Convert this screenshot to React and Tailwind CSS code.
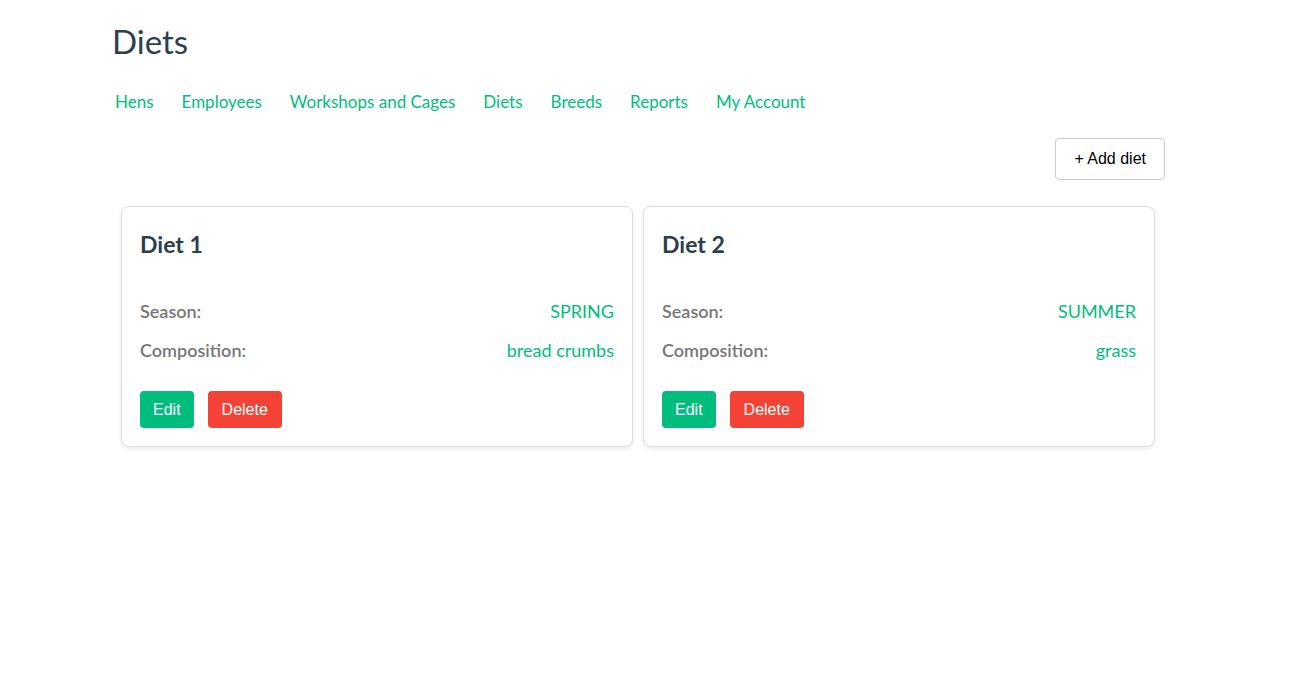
import React from 'react';

const links = ['Hens', 'Employees', 'Workshops and Cages', 'Diets', 'Breeds', 'Reports', 'My Account'];

const diets = [
  { id: 1, name: 'Diet 1', season: 'SPRING', composition: 'bread crumbs' },
  { id: 2, name: 'Diet 2', season: 'SUMMER', composition: 'grass' },
];

export default function App() {
  return (
    <div className="min-h-screen bg-white font-['Lato','Noto_Sans',sans-serif]">
      <div className="pl-[112px] pr-[141px] pt-[22px]">
        <h1 className="text-[33px] leading-[38px] font-normal text-[#2c3e50]">Diets</h1>

        {/* Navegación */}
        <nav className="mt-[30px] flex gap-[28px] pl-[3px] text-[17px] leading-6 text-[#00bd7e]">
          {links.map((l) => (
            <a key={l} href="#" className="whitespace-nowrap">{l}</a>
          ))}
        </nav>

        <div className="mt-6 flex justify-end">
          <button className="h-[42px] px-[18px] rounded border border-[#ccc] bg-white text-[16px] text-black font-['Liberation_Sans',Arial,sans-serif]">
            + Add diet
          </button>
        </div>

        <div className="mt-[26px] grid grid-cols-2 gap-[10px] pl-[9px] pr-[10px]">
          {diets.map((d) => (
            <DietCard key={d.id} diet={d} />
          ))}
        </div>
      </div>
    </div>
  );
}

function DietCard({ diet }) {
  return (
    <div className="rounded-lg border border-[#dedede] bg-white px-[18px] pt-[21px] pb-[18px] shadow-[0_2px_4px_rgba(0,0,0,0.08)]">
      <h2 className="text-[23px] leading-8 font-bold text-[#2c3e50]">{diet.name}</h2>
      <div className="mt-[38px] flex flex-col gap-[13px] text-[18px] leading-[26px]">
        <div className="flex justify-between">
          <span className="font-semibold text-[#777]">Season:</span>
          <span className="text-[#00bd7e]">{diet.season}</span>
        </div>
        <div className="flex justify-between">
          <span className="font-semibold text-[#777]">Composition:</span>
          <span className="text-[#00bd7e]">{diet.composition}</span>
        </div>
      </div>
      <div className="mt-[28px] flex gap-[14px] font-['Liberation_Sans',Arial,sans-serif] text-[16px] text-white">
        <button className="h-[37px] px-[13px] rounded bg-[#00bd7e]">Edit</button>
        <button className="h-[37px] px-[14px] rounded bg-[#f44336]">Delete</button>
      </div>
    </div>
  );
}
